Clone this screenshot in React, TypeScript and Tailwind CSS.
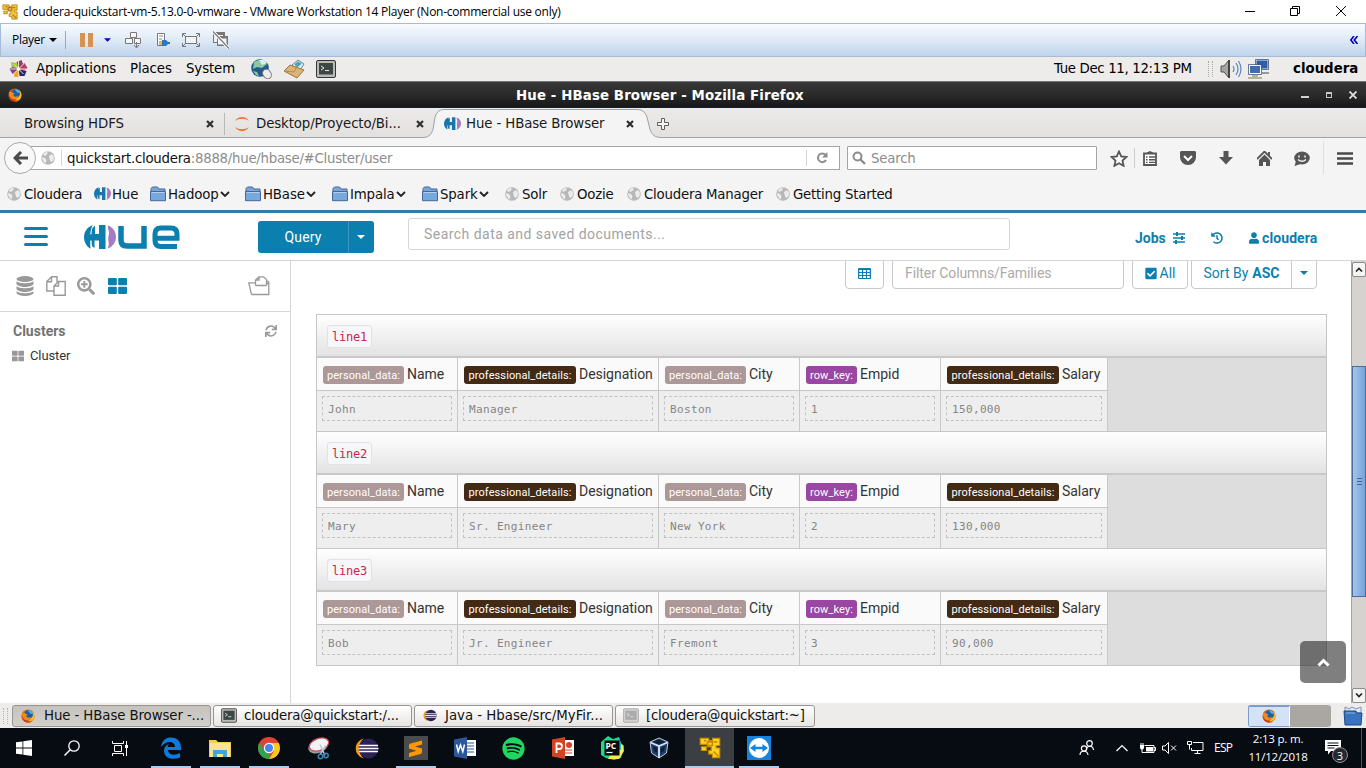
import React from "react";
import type { ReactNode } from "react";
import { FaSearchPlus, FaThLarge, FaSync, FaHistory, FaCheckSquare, FaSpotify, FaUser } from "react-icons/fa";

const dejavu = "font-['DejaVu_Sans',sans-serif]";

function Cell({ className, children }: { className: string; children?: ReactNode }) {
  return <div className={"flex shrink-0 items-center whitespace-nowrap " + className}>{children}</div>;
}

function VmwareIcon({ className, bright }: { className: string; bright?: boolean }) {
  const a = bright ? "#ffd21c" : "#f4c542";
  const b = bright ? "#c98c00" : "#b27a12";
  return (
    <svg viewBox="0 0 18 18" className={className}>
      <path d="M1 1h7v2h3V1h6v6h-3v2h3v8h-6v-3H8v-3h2V8H7V6H1z" fill={a} stroke={b} strokeWidth=".9" />
      <path d="M7 4h4v3H7zM12 12l4 4M4 3h2M12 4h3" fill="none" stroke={b} strokeWidth="1.3" />
      <path d="M2 8h4v3H2z" fill={a} stroke={b} strokeWidth=".9" />
    </svg>
  );
}

function FirefoxIcon({ className }: { className: string }) {
  return (
    <svg viewBox="0 0 16 16" className={className}>
      <circle cx="8" cy="8" r="7.5" fill="#e4600f" />
      <path d="M8 15.5A7.5 7.5 0 0 0 14.5 4.5L12 2l1 6-4 5z" fill="#ffb520" />
      <circle cx="8.6" cy="6.3" r="5" fill="#1c5fa8" />
      <path d="M8 2c2-1.500 5 .5 5.500 4l-3-1z" fill="#4db3e8" />
      <path d="M.8 5C2 4 4 4 5.500 5.500L7.500 6 6 8c1 2 3 2.500 5.500 1-1 4-6 5-9 2z" fill="#f08a1c" />
      <path d="M.6 8c.5 4 3.500 7.500 8 7.500 2 0 3-.5 4-1.300-6 .8-9.500-1.500-12-6.200z" fill="#c9301a" />
    </svg>
  );
}

function GlobeIcon({ className }: { className: string }) {
  return (
    <svg viewBox="0 0 14 14" className={className}>
      <circle cx="7" cy="7" r="6.800" fill="#b8b8b8" />
      <path d="M2 3l3-2 2 .6L5.500 4 3 5zM1 6l3 1 1.500 2-1 3.500C2.500 11 1 9 1 6zM8 5l3-2 2 2.500-.5 4L10 11 8.500 8z" fill="#ececec" />
    </svg>
  );
}

function HueMark({ blue }: { blue: string }) {
  return (
    <g>
      <path d="M9 0C3 2 0 7 0 12s2.500 9.500 6.500 11.700C6 20 6.500 17 7 15.500h8V24h6.500V0H15v9H7.500C7.500 5.500 8 3 9 0z" fill={blue} />
      <path d="M7.500 9.500V4L11 .5V9.500zM7.500 15v6l3 2V15z" fill={blue} />
      <path d="M24 .5c5.500 2 8 6.500 8 11.500s-3 9.500-8.500 11.800c2.500-5 .5-7 .8-10.800 0-3 1-3 .7-6-.3-2-1.500-3-1-6.500z" fill="#a77bc0" />
    </g>
  );
}

function HueIcon({ className }: { className: string }) {
  return (
    <svg viewBox="0 0 32 24" className={className}>
      <HueMark blue="#1a77ae" />
    </svg>
  );
}

function FolderIcon() {
  return (
    <svg viewBox="0 0 17 16" className="h-4 w-[17px]">
      <path d="M1 14V2.500L2.500 1h5L9 3h6v2" fill="#7da4d3" stroke="#41699f" />
      <path d="M.5 5.500h15v9.200H.5z" fill="#78a8dc" stroke="#41699f" />
      <path d="M1.500 6.500h13" stroke="#b4d0ee" />
    </svg>
  );
}

function TerminalIcon({ className, faded }: { className: string; faded?: boolean }) {
  return (
    <svg viewBox="0 0 20 18" className={className}>
      <rect x=".5" y=".5" width="19" height="17" rx="1.500" fill={faded ? "#d0d0d0" : "#b9bbb6"} stroke={faded ? "#a5a5a5" : "#33373a"} />
      <rect x="3" y="3" width="14" height="11.500" fill={faded ? "#ababab" : "#3e4746"} />
      <path d="M5 6l3 2-3 2M9 10.500h4" stroke={faded ? "#e8e8e8" : "#e6eae4"} fill="none" />
    </svg>
  );
}

function EclipseIcon({ className }: { className: string }) {
  return (
    <svg viewBox="0 0 24 22" className={className}>
      <path d="M9 1C-2 4-2 18 9 21 3 17 3 5 9 1z" fill="#f59a22" />
      <circle cx="13.500" cy="11" r="10" fill="#2c2255" />
      <path d="M4 8h19M3.500 11h20M4 14h19" stroke="#fff" strokeWidth="1.500" />
    </svg>
  );
}

function CloseX() {
  return (
    <svg viewBox="0 0 8 8" className="h-2 w-2">
      <path d="M1 1l6 6M7 1L1 7" stroke="#2f2f2f" strokeWidth="2.200" />
    </svg>
  );
}

function CaretDown({ className }: { className: string }) {
  return (
    <svg viewBox="0 0 8 4" className={className}>
      <path d="M0 0h8L4 4z" fill="currentColor" />
    </svg>
  );
}

function VmTitleBar() {
  return (
    <div className="flex h-[23px] shrink-0 items-center bg-white font-['Open_Sans',sans-serif] text-[12px] text-black">
      <Cell className="w-[23px] pl-[2px]"><VmwareIcon className="h-4 w-4" /></Cell>
      <Cell className="w-[1222px] tracking-[-0.24px]">cloudera-quickstart-vm-5.13.0-0-vmware - VMware Workstation 14 Player (Non-commercial use only)</Cell>
      <Cell className="w-[45px]"><svg viewBox="0 0 10 10" className="h-[10px] w-[10px]"><path d="M0 4.500h10" stroke="#000" /></svg></Cell>
      <Cell className="w-[46px] pb-[2px]">
        <svg viewBox="0 0 10 10" className="h-[10px] w-[10px]"><path d="M.5 2.500h7v7h-7zM2.500 2.500v-2h7v7h-2" fill="none" stroke="#000" /></svg>
      </Cell>
      <Cell className="pb-[2px]"><svg viewBox="0 0 10 10" className="h-[10px] w-[10px]"><path d="M0 0l10 10M10 0L0 10" stroke="#000" /></svg></Cell>
    </div>
  );
}

function PlayerToolbar() {
  return (
    <div className="flex h-[34px] shrink-0 items-center border border-[#a5bcd8] bg-linear-to-b from-[#f8fcff] via-[#dfeaf6] to-[#bed3ec] font-['Open_Sans',sans-serif] text-[12px] text-black">
      <Cell className="w-[39px] pl-[11px] tracking-[-0.3px]">Player</Cell>
      <Cell className="w-[25px] justify-end pr-[8px]"><CaretDown className="h-[4px] w-[8px]" /></Cell>
      <Cell className="h-[18px] w-[15px] border-l border-[#8fa9cb]" />
      <Cell className="w-[24px]">
        <svg viewBox="0 0 13 14" className="h-[14px] w-[13px]"><path d="M0 0h5v14H0zM8 0h5v14H8z" fill="#d6924e" /></svg>
      </Cell>
      <Cell className="w-[21px] text-[#0000c8]"><CaretDown className="h-[4px] w-[7px]" /></Cell>
      <Cell className="w-[31px]">
        <svg viewBox="0 0 17 18" className="h-[18px] w-[17px]" fill="#f5f7fa" stroke="#777" strokeWidth="1">
          <path d="M5.500 1.500h6v5h-6zM.5 7.500h7v5h-7zM9.500 7.500h6v5h-6z" /><path d="M11.500 11v5M9 14l2.500 3 2.500-3" fill="none" />
        </svg>
      </Cell>
      <Cell className="w-[26px]">
        <svg viewBox="0 0 14 16" className="h-[16px] w-[14px]">
          <path d="M1.500 1.500h7v12h-7z" fill="#fff" stroke="#777" /><path d="M3 4h4M3 7h3" stroke="#888" /><path d="M3 9h3v4H3z" fill="#e9b83a" /><path d="M6 8h4l2 2h2v2h-2l-2 2H6z" fill="#2a78c4" />
        </svg>
      </Cell>
      <Cell className="w-[30px]">
        <svg viewBox="0 0 18 14" className="h-[14px] w-[18px]" fill="none" stroke="#777">
          <path d="M3.500 3.500h11v7h-11z" fill="#f1f5fa" /><path d="M.5 4V.5H4M14 .5h3.500V4M17.500 10v3.500H14M4 13.500H.5V10M1 1l3 3M17 1l-3 3M17 13l-3-3M1 13l3-3" />
        </svg>
      </Cell>
      <Cell className="w-[24px]">
        <svg viewBox="0 0 18 18" className="h-[18px] w-[18px]">
          <path d="M1 1h12v11H1z" fill="#777" /><path d="M2 4h9v7H2z" fill="#eef3f9" /><path d="M5 5h11v10H5z" fill="#777" /><path d="M6 7.500h8.500v6H6z" fill="#eef3f9" /><path d="M1 .5l16 17" stroke="#fff" strokeWidth="3" /><path d="M1 .5l16 17" stroke="#777" strokeWidth="1.200" />
        </svg>
      </Cell>
      <div className="flex-1" />
      <Cell className="w-[15px]">
        <svg viewBox="0 0 8 8" className="h-2 w-2"><path d="M4 0L.8 4 4 8M7.500 0l-3.200 4 3.200 4" fill="none" stroke="#0000b8" strokeWidth="1.600" /></svg>
      </Cell>
    </div>
  );
}

function GnomeTopPanel() {
  return (
    <div className={"flex h-[24px] shrink-0 items-center bg-[#edeceb] pb-[1px] text-[13.33px] text-black " + dejavu}>
      <Cell className="w-[36px] pl-2">
        <svg viewBox="0 0 20 20" className="h-[20px] w-[21px]">
          <path d="M10 10L3 8l-.5-5L8 4z" fill="#9ccb3b" /><path d="M10 10L8 3l5-2 2 5z" fill="#8c3a8c" /><path d="M10 10l6-6 3 5-3 2z" fill="#c0356f" /><path d="M10 10l8 2-2 5-5 0z" fill="#262577" /><path d="M10 10l1 8-5 0-1-4z" fill="#efa724" /><path d="M10 10l-6 5-3-5 3-2z" fill="#7e3f98" />
          <path d="M10 2v16M2 10h16M5 5l10 10M15 5L5 15" stroke="#f6d9a0" strokeWidth="1" /><circle cx="10" cy="10" r="1.800" fill="#fff" />
        </svg>
      </Cell>
      <Cell className="w-[94px] tracking-[-0.1px]">Applications</Cell>
      <Cell className="w-[56px] tracking-[-0.1px]">Places</Cell>
      <Cell className="w-[64px] tracking-[-0.1px]">System</Cell>
      <Cell className="w-[33px]">
        <svg viewBox="0 0 22 20" className="h-[20px] w-[22px]">
          <circle cx="10" cy="9" r="8.800" fill="#245a8c" /><path d="M4 3l4-2 6 1 3 3-5 4-5-1-4 2zM3 12l4 1 2 4-3-1z" fill="#8cc7a0" /><path d="M9 1h6l2 3-5 2z" fill="#d5eef6" /><ellipse cx="17" cy="15" rx="4" ry="5" transform="rotate(-35 17 15)" fill="#ededed" stroke="#777" />
        </svg>
      </Cell>
      <Cell className="w-[33px]">
        <svg viewBox="0 0 22 20" className="h-[20px] w-[22px]">
          <path d="M9 6l6-5 6 4-5 8z" fill="#d8eaf2" stroke="#698f9c" /><path d="M12 6l4-3M13 8l5-4" stroke="#4a9cb4" strokeWidth="2" /><path d="M1 12l6-6 14 5-7 8z" fill="#dcb377" stroke="#9c743a" /><path d="M1 12l10 1 3-6" fill="none" stroke="#b58a4b" />
        </svg>
      </Cell>
      <Cell className="w-[28px]"><TerminalIcon className="h-[18px] w-[20px]" /></Cell>
      <div className="flex-1" />
      <Cell className="w-[154px] tracking-[-0.35px]">Tue Dec 11, 12:13 PM</Cell>
      <Cell className="h-4 w-[12px]"><div className="h-4 w-[5px] border-x border-dotted border-[#aaa]" /></Cell>
      <Cell className="w-[28px]">
        <svg viewBox="0 0 22 20" className="h-[20px] w-[22px]">
          <path d="M1 7h3l5-6v18l-5-6H1z" fill="#a4a4a2" stroke="#555" /><path d="M9 1v18" stroke="#444" strokeWidth="2" /><path d="M13 7q2 3 0 6M16 4q4 6 0 12M18.500 2q5 8 0 16" fill="none" stroke="#5a86bf" strokeWidth="1.200" />
        </svg>
      </Cell>
      <Cell className="w-[45px]">
        <svg viewBox="0 0 22 20" className="h-[20px] w-[22px]">
          <path d="M8 1h12v9H8z" fill="#2e5ea3" stroke="#dfe5ed" /><path d="M7.500.5h13v10h-13z" fill="none" stroke="#465b7c" strokeWidth=".8" /><path d="M14 14h7" stroke="#999" strokeWidth="2" /><path d="M1.500 6.500h11v8h-11z" fill="#3d6db3" stroke="#fff" /><path d="M.5 5.500h13v10H.5z" fill="none" stroke="#465b7c" strokeWidth=".8" /><path d="M4 17h6M0 19h14" stroke="#a0a094" strokeWidth="1.500" />
        </svg>
      </Cell>
      <Cell className="w-[73px] font-bold">cloudera</Cell>
    </div>
  );
}

function FirefoxTitle() {
  return (
    <div className={"flex h-[27px] shrink-0 items-center border-y border-t-[#777] border-b-[#14212c] bg-linear-to-b from-[#383838] via-[#2b2b2b] to-[#171717] text-[13.33px] font-bold text-white " + dejavu}>
      <Cell className="w-[516px] pl-2"><FirefoxIcon className="h-[14px] w-[14px]" /></Cell>
      <Cell className="w-[785px] pt-[2px] tracking-[0.12px]">Hue - HBase Browser - Mozilla Firefox</Cell>
      <Cell className="w-[25px] pt-[5px]"><div className="h-[2px] w-[8px] bg-[#d0d0d0]" /></Cell>
      <Cell className="w-[23px]"><div className="h-[6px] w-[6px] border border-t-2 border-[#c8c8c8]" /></Cell>
      <Cell className=""><svg viewBox="0 0 8 8" className="h-2 w-2"><path d="M.5.5l7 7M7.500.5l-7 7" stroke="#ddd" strokeWidth="1.800" /></svg></Cell>
    </div>
  );
}

function TabStrip() {
  return (
    <div className={"relative flex h-[30px] shrink-0 items-center border-b border-[#a5a5a3] bg-linear-to-b from-[#ecebea] to-[#e2e1df] pt-[2px] text-[13.33px] text-[#1a1a1a] " + dejavu}>
      <svg viewBox="0 0 240 30" className="absolute top-0 left-[422px] h-[30px] w-[240px]">
        <path d="M0 30v-.5c6 0 9-2 11-8L13 9c2-6 5-7.500 10-7.500h191c6 0 9 2 11 7.500l3 12.500c2 5 4 8 12 8v.5z" fill="#f4f4f4" />
        <path d="M0 29.500c6 0 9-2 11-8L13 9c2-6 5-7.500 10-7.500h191c6 0 9 2 11 7.500l3 12.500c2 5 4 8 12 8" fill="none" stroke="#a0a09e" />
      </svg>
      <Cell className="w-[206px] pl-6 tracking-[-0.12px]">Browsing HDFS</Cell>
      <Cell className="w-[18px]"><CloseX /></Cell>
      <Cell className="h-[22px] w-[10px] border-l border-[#b8b8b6]" />
      <Cell className="w-[22px]">
        <svg viewBox="0 0 16 16" className="h-4 w-4"><path d="M1 5C4-.5 12-.5 15 5 11 2 5 2 1 5zM1 11c3 5.500 11 5.500 14 0-4 3-10 3-14 0z" fill="#ee7330" /></svg>
      </Cell>
      <Cell className="w-[160px] tracking-[-0.12px]">Desktop/Proyecto/Bi...</Cell>
      <Cell className="w-[28px]"><CloseX /></Cell>
      <Cell className="relative w-[22px]"><HueIcon className="h-[13px] w-[17px]" /></Cell>
      <Cell className="relative w-[160px] tracking-[-0.12px]">Hue - HBase Browser</Cell>
      <Cell className="relative w-[31px]"><CloseX /></Cell>
      <Cell className="">
        <svg viewBox="0 0 12 12" className="h-3 w-3"><path d="M4.500.5h3v4h4v3h-4v4h-3v-4h-4v-3h4z" fill="#f5f5f5" stroke="#5d5d5d" /></svg>
      </Cell>
    </div>
  );
}

function NavBar() {
  return (
    <div className={"flex h-[40px] shrink-0 items-center bg-[#f4f4f4] text-[13.33px] " + dejavu}>
      <div className="relative z-10 ml-1 flex h-8 w-8 shrink-0 items-center justify-center rounded-full border border-[#a9a9a9] bg-[#f8f8f8]">
        <svg viewBox="0 0 15 14" className="h-[14px] w-[15px]"><path d="M8 1L2 7l6 6M2 7h13" fill="none" stroke="#4a4a4a" strokeWidth="3" /></svg>
      </div>
      <div className="-ml-3 flex h-6 w-[816px] shrink-0 items-center border border-[#a5a5a5] bg-white">
        <Cell className="w-[36px] pl-4"><GlobeIcon className="h-[14px] w-[14px]" /></Cell>
        <Cell className="h-4 w-[6px] border-l border-[#d5d5d5]" />
        <Cell className="w-[739px] pt-[2px] tracking-[-0.27px] text-[#8c8c8c]"><span className="text-[#111]">quickstart.cloudera</span>:8888/hue/hbase/#Cluster/user</Cell>
        <Cell className="h-4 w-[10px] border-l border-[#d5d5d5]" />
        <Cell className="">
          <svg viewBox="0 0 12 12" className="h-3 w-3"><path d="M9.500 3A4.300 4.300 0 1 0 10 8" fill="none" stroke="#8e8e8e" strokeWidth="2" /><path d="M11.500 0v5.500H6z" fill="#8e8e8e" /></svg>
        </Cell>
      </div>
      <div className="ml-[7px] flex h-6 w-[250px] shrink-0 items-center rounded-[1px] border border-[#a5a5a5] bg-white">
        <Cell className="w-[23px] pl-1">
          <svg viewBox="0 0 14 14" className="h-[14px] w-[14px]"><circle cx="5.500" cy="5.500" r="4" fill="none" stroke="#8c8c8c" strokeWidth="2" /><path d="M8.500 8.500l4.500 4.500" stroke="#8c8c8c" strokeWidth="2.400" /></svg>
        </Cell>
        <span className="pt-[2px] tracking-[-0.2px] text-[#8c8c8c]">Search</span>
      </div>
      <Cell className="w-[37px] justify-end">
        <svg viewBox="0 0 18 17" className="mr-[6px] h-[17px] w-[18px]"><path d="M9 1.500l2.200 4.900 5.300.6-4 3.600 1.100 5.200L9 13.200l-4.600 2.600 1.100-5.200-4-3.600 5.300-.6z" fill="#fafafa" stroke="#555" strokeWidth="1.800" /></svg>
      </Cell>
      <Cell className="h-5 w-[9px] border-l border-[#ccc]" />
      <Cell className="w-[37px]">
        <svg viewBox="0 0 14 15" className="h-[15px] w-[14px]"><path d="M1 2.500h12v11.500H1z" fill="#fff" stroke="#555" strokeWidth="1.800" /><path d="M4 3V1.500L7 0l3 1.500V3z" fill="#555" /><path d="M3 6h1.500M6 6h6M3 8.700h1.500M6 8.700h6M3 11.400h1.500M6 11.400h6" stroke="#555" strokeWidth="1.400" /></svg>
      </Cell>
      <Cell className="w-[39px]">
        <svg viewBox="0 0 16 14" className="h-[14px] w-[16px]"><path d="M1 0h14l1 1v5a8 8 0 0 1-16 0V1z" fill="#555" /><path d="M4 5l4 4 4-4" fill="none" stroke="#fff" strokeWidth="2" /></svg>
      </Cell>
      <Cell className="w-[38px]"><svg viewBox="0 0 14 14" className="h-[14px] w-[14px]"><path d="M4.500 0h5v6H14l-7 7.500L0 6h4.500z" fill="#555" /></svg></Cell>
      <Cell className="w-[37px]">
        <svg viewBox="0 0 15 15" className="h-[15px] w-[15px]"><path d="M0 8l7.500-7.500L15 8" fill="none" stroke="#555" strokeWidth="1.800" /><path d="M2 9l5.500-5.500L13 9v6H9v-4H6v4H2z" fill="#555" /><path d="M11 1h2v4l-2-2z" fill="#555" /></svg>
      </Cell>
      <Cell className="w-[29px]">
        <svg viewBox="0 0 16 15" className="h-[15px] w-[16px]"><ellipse cx="8" cy="7" rx="7.800" ry="6.500" fill="#555" /><path d="M2 10L.5 15l6-2z" fill="#555" /><path d="M5 4.500v2M11 4.500v2M4 8.500q4 3.500 8 0" fill="none" stroke="#f4f4f4" strokeWidth="1.500" /></svg>
      </Cell>
      <Cell className="h-8 w-[14px] border-l border-[#ddd]" />
      <Cell className=""><svg viewBox="0 0 16 13" className="h-[13px] w-4"><path d="M0 1.500h16M0 6.500h16M0 11.500h16" stroke="#4a4a4a" strokeWidth="2.400" /></svg></Cell>
    </div>
  );
}

function Chevron() {
  return <svg viewBox="0 0 10 6" className="ml-[1px] h-[6px] w-[10px]"><path d="M1 1l4 4 4-4" fill="none" stroke="#222" strokeWidth="1.800" /></svg>;
}

const bookmarks = [
  { label: "Cloudera", kind: "globe", width: "w-[87px]" },
  { label: "Hue", kind: "hue", width: "w-[56px]" },
  { label: "Hadoop", kind: "folder", width: "w-[95px]" },
  { label: "HBase", kind: "folder", width: "w-[87px]" },
  { label: "Impala", kind: "folder", width: "w-[90px]" },
  { label: "Spark", kind: "folder", width: "w-[83px]" },
  { label: "Solr", kind: "globe", width: "w-[55px]" },
  { label: "Oozie", kind: "globe", width: "w-[67px]" },
  { label: "Cloudera Manager", kind: "globe", width: "w-[149px]" },
  { label: "Getting Started", kind: "globe", width: "w-[130px]" },
];

function BookmarksBar() {
  return (
    <div className={"flex h-[35px] shrink-0 items-center border-b-3 border-[#2f7fa3] bg-[#f4f4f4] pl-[7px] text-[13.33px] text-[#111] " + dejavu}>
      {bookmarks.map((b) => (
        <Cell key={b.label} className={b.width}>
          <div className="flex w-[17px] shrink-0">
            {b.kind === "globe" && <GlobeIcon className="h-[14px] w-[14px]" />}
            {b.kind === "hue" && <HueIcon className="h-[13px] w-[17px]" />}
            {b.kind === "folder" && <FolderIcon />}
          </div>
          <span className={"pt-[2px] " + (b.kind === "globe" ? "tracking-[-0.23px]" : "ml-[1px] tracking-[-0.15px]")}>{b.label}</span>
          {b.kind === "folder" && <Chevron />}
        </Cell>
      ))}
    </div>
  );
}

function HueHeader() {
  return (
    <div className="flex h-[48px] shrink-0 items-center border-b border-[#d6d6d6] bg-white text-[14px] text-[#0b7fad]">
      <Cell className="w-[84px] pl-6"><svg viewBox="0 0 24 19" className="h-[19px] w-6"><path d="M1.500 1.500h21M1.500 9.500h21M1.500 17.500h21" stroke="#0b7fad" strokeWidth="3" strokeLinecap="round" /></svg></Cell>
      <Cell className="w-[174px]">
        <svg viewBox="0 0 96 24" className="h-6 w-24">
          <HueMark blue="#0b7fad" />
          <path d="M9.500 0C7.500 3 7 6 6.800 9.500M6.800 15.500c0 3 .5 6 2 8.500" stroke="#fff" strokeWidth="1" fill="none" />
          <path d="M37 1v14q0 6 6 6h17V1" fill="none" stroke="#0b7fad" strokeWidth="5.500" />
          <path d="M93 21.500H77q-6 0-6-6V9q0-6 6-6h10q6 0 6 6v4.200H71" fill="none" stroke="#0b7fad" strokeWidth="5" />
        </svg>
      </Cell>
      <div className="flex h-8 w-[116px] shrink-0 rounded-[3px] bg-[#0b7fad] text-white">
        <div className="flex w-[91px] items-center justify-center border-r border-[#3d97bd] pt-[1px] tracking-[0.1px]">Query</div>
        <div className="flex flex-1 items-center justify-center"><CaretDown className="mr-[1px] h-[4px] w-[8px]" /></div>
      </div>
      <div className="mb-[6px] ml-[34px] flex h-8 w-[602px] shrink-0 items-center rounded-[3px] border border-[#d5d5d5] pt-[1px] pl-[15px] tracking-[0.46px] text-[#a3a3a3]">Search data and saved documents...</div>
      <Cell className="ml-[125px] w-[38px] pt-[3px] font-bold">Jobs</Cell>
      <Cell className="w-[38px] pt-[3px]">
        <svg viewBox="0 0 12 12" className="h-3 w-3" stroke="#0b7fad"><path d="M0 2h12M0 6h12M0 10h12" strokeWidth="1.300" /><path d="M4 0v4M9 4v4M3 8v4" strokeWidth="2" /></svg>
      </Cell>
      <Cell className="w-[38px] pt-[3px]"><FaHistory className="h-3 w-3" /></Cell>
      <Cell className="w-[13px] pt-[2px]"><FaUser className="h-[12px] w-[10px]" /></Cell>
      <Cell className="pt-[3px] font-bold tracking-[0.1px]">cloudera</Cell>
    </div>
  );
}

function Sidebar() {
  return (
    <div className="flex w-[291px] shrink-0 flex-col border-r border-[#d6d6d6] bg-white">
      <div className="flex h-[51px] items-center border-b border-[#d6d6d6] text-[#9b9b9b]">
        <Cell className="w-[46px] pl-4">
          <svg viewBox="0 0 18 20" className="h-5 w-[18px]" fill="#999"><ellipse cx="9" cy="3" rx="8.500" ry="3" /><path d="M.5 5c2 3 15 3 17 0v3c-2 4-15 4-17 0zM.5 10c2 3 15 3 17 0v3c-2 4-15 4-17 0zM.5 15c2 3 15 3 17 0v2c-2 4-15 4-17 0z" /></svg>
        </Cell>
        <Cell className="w-[31px]">
          <svg viewBox="0 0 20 20" className="h-5 w-5" fill="#fff" stroke="#999" strokeWidth="1.400"><path d="M5.500.8H11v5.500M8 15H.8V5.500L5.500.8v5H.8" /><path d="M12.500 5.500h6.700v13.700H8V10zM12.500 5.500V10H8" /></svg>
        </Cell>
        <Cell className="w-[31px]"><FaSearchPlus className="h-[18px] w-[18px]" /></Cell>
        <Cell className="w-[140px] text-[#0b7fad]">
          <svg viewBox="0 0 19 16" className="h-4 w-[19px]" fill="#0b7fad"><rect width="8.800" height="7.300" rx="1" /><rect x="10.200" width="8.800" height="7.300" rx="1" /><rect y="8.700" width="8.800" height="7.300" rx="1" /><rect x="10.200" y="8.700" width="8.800" height="7.300" rx="1" /></svg>
        </Cell>
        <Cell className="">
          <svg viewBox="0 0 22 20" className="h-5 w-[22px]" fill="none" stroke="#999" strokeWidth="1.300"><path d="M3.500 18.500L.8 6.800H7.500M3.500 18.500h17.300V6L18.500 4.500M.8 6.800h.5M18.500 9l2-3M3.500 18.500M7.500 9.500h11M7.500 9.500V4L11 .8h4.500l3 2.700v6M11 .8V4H7.500" /></svg>
        </Cell>
      </div>
      <div className="flex h-[38px] items-center justify-between pr-[13px] pl-[13px]">
        <span className="text-[14px] font-bold text-[#737373]">Clusters</span>
        <FaSync className="h-[12px] w-[12px] text-[#999]" />
      </div>
      <div className="flex h-[11px] items-center pl-3 text-[13px] tracking-[-0.1px] text-[#333]">
        <FaThLarge className="mr-[6px] h-3 w-3 text-[#999]" />Cluster
      </div>
    </div>
  );
}

function FilterRow() {
  const box = "flex h-8 shrink-0 items-center justify-center rounded-[4px] border border-[#c9c9c9] ";
  return (
    <div className="-mt-[4px] ml-[554px] flex h-8 shrink-0 text-[14px] text-[#0b7fad]">
      <div className={box + "w-[39px]"}>
        <svg viewBox="0 0 13 11" className="h-[11px] w-[13px]"><rect width="13" height="11" rx="1" fill="#0b7fad" /><path d="M1.300 2h2.700v2H1.300zM5.200 2h2.700v2H5.200zM9 2h2.700v2H9zM1.300 5h2.700v2H1.300zM5.200 5h2.700v2H5.200zM9 5h2.700v2H9zM1.300 8h2.700v2H1.300zM5.200 8h2.700v2H5.200zM9 8h2.700v2H9z" fill="#fff" /></svg>
      </div>
      <div className={box + "ml-2 w-[232px] justify-start pl-3 tracking-[-0.08px] text-[#aaa]"}>Filter Columns/Families</div>
      <div className={box + "ml-2 w-[56px] gap-[3px]"}><FaCheckSquare className="h-[13px] w-[12px]" />All</div>
      <div className={box + "ml-[3px] w-[126px]"}>
        <div className="flex h-full w-[100px] items-center justify-center gap-1 border-r border-[#c9c9c9]">Sort By <b>ASC</b></div>
        <div className="flex flex-1 justify-center"><CaretDown className="h-[4px] w-[8px]" /></div>
      </div>
    </div>
  );
}

const columns = [
  { family: "personal_data:", name: "Name", width: "w-[141px]", tag: "w-[81px] bg-[#ac9799]" },
  { family: "professional_details:", name: "Designation", width: "w-[201px]", tag: "w-[112px] bg-[#432a15]" },
  { family: "personal_data:", name: "City", width: "w-[141px]", tag: "w-[81px] bg-[#ac9799]" },
  { family: "row_key:", name: "Empid", width: "w-[141px]", tag: "w-[51px] bg-[#9a47a3]" },
  { family: "professional_details:", name: "Salary", width: "w-[167px]", tag: "w-[112px] bg-[#432a15]" },
];

const rows = [
  { key: "line1", values: ["John", "Manager", "Boston", "1", "150,000"] },
  { key: "line2", values: ["Mary", "Sr. Engineer", "New York", "2", "130,000"] },
  { key: "line3", values: ["Bob", "Jr. Engineer", "Fremont", "3", "90,000"] },
];

function DataTable() {
  return (
    <div className="mt-[25px] ml-[25px] w-[1011px] border border-t-0 border-[#c6c6c6]">
      {rows.map((r) => (
        <div key={r.key} className="border-t border-[#c6c6c6]">
          <div className="flex h-[43px] items-center border-b-2 border-[#c8c8c8] bg-linear-to-b from-white to-[#e3e3e3] pl-[10px]">
            <span className="mt-[2px] flex h-[23px] w-[45px] items-center justify-center rounded-[3px] border border-[#e1e1e8] bg-[#f7f7f9] font-['DejaVu_Sans_Mono',monospace] text-[12px] tracking-[-0.2px] text-[#c7254e]">{r.key}</span>
          </div>
          <div className="flex h-[73px] bg-[#ddd]">
            {columns.map((c, i) => (
              <div key={i} className={"shrink-0 border-r border-[#c8c8c8] bg-[#eee] " + c.width}>
                <div className="flex h-[33px] items-center border-b border-[#c8c8c8] bg-[#fafafa] pl-[6px] text-[14px] tracking-[-0.03px] whitespace-nowrap text-[#333]">
                  <span className={"mt-[2px] mr-[3px] flex h-[18px] shrink-0 items-center justify-center rounded-[3px] pt-[2px] text-[11px] tracking-[0.1px] text-white " + c.tag}>{c.family}</span>
                  {c.name}
                </div>
                <div className="mx-[5px] mt-[5px] flex h-[25px] items-center border border-dashed border-[#c2c2c2] pt-[3px] pl-[5px] font-['DejaVu_Sans_Mono',monospace] text-[11px] tracking-[0.35px] text-[#858585]">{r.values[i]}</div>
              </div>
            ))}
          </div>
        </div>
      ))}
    </div>
  );
}

function ScrollBar() {
  const btn = "flex h-[15px] shrink-0 items-center justify-center rounded-[2px] border border-[#8c8c8a] bg-[#f5f5f4]";
  return (
    <div className="flex w-[15px] shrink-0 flex-col border-l border-[#a8a5a0] bg-[#d5d2cf] pt-[1px]">
      <div className={btn}><svg viewBox="0 0 8 5" className="h-[5px] w-2"><path d="M1 4.500l3-3 3 3" fill="none" stroke="#222" strokeWidth="1.600" /></svg></div>
      <div className="mt-[89px] flex h-[231px] shrink-0 items-center justify-center border border-[#4a6c9c] bg-linear-to-r from-[#a3c4eb] to-[#76a3da]">
        <div className="h-[7px] w-[5px] border-y border-[#44648f]"><div className="mt-[2px] h-px bg-[#44648f]" /></div>
      </div>
      <div className="flex-1" />
      <div className={btn}><svg viewBox="0 0 8 5" className="h-[5px] w-2"><path d="M1 .5l3 3 3-3" fill="none" stroke="#222" strokeWidth="1.600" /></svg></div>
    </div>
  );
}

function GnomeBottomPanel() {
  const btn = "mr-[2px] flex h-[22px] shrink-0 items-center rounded-[3px] border border-[#989692] pl-2 whitespace-nowrap ";
  const light = "bg-linear-to-b from-white to-[#e6e5e3] ";
  return (
    <div className={"flex h-[25px] shrink-0 items-center bg-[#edeceb] text-[13.33px] text-[#111] " + dejavu}>
      <div className="mr-1 ml-[3px] h-4 w-[5px] border-x border-dotted border-[#b5b5b3]" />
      <div className={btn + "w-[199px] bg-linear-to-b from-[#c6c3be] to-[#d3d0cb]"}><FirefoxIcon className="mr-[9px] h-[14px] w-[14px]" /><span className="pt-[1px] tracking-[-0.1px]">Hue - HBase Browser -...</span></div>
      <div className={btn + light + "w-[199px]"}><TerminalIcon className="mr-[7px] -ml-[1px] h-[15px] w-4" /><span className="tracking-[-0.2px]">cloudera@quickstart:/...</span></div>
      <div className={btn + light + "w-[199px]"}><EclipseIcon className="mr-[8px] h-[13px] w-[14px]" /><span className="tracking-[-0.02px]">Java - Hbase/src/MyFir...</span></div>
      <div className={btn + light + "w-[200px]"}><TerminalIcon faded className="mr-[7px] -ml-[1px] h-[15px] w-4" /><span className="tracking-[-0.23px]">[cloudera@quickstart:~]</span></div>
      <div className="flex-1" />
      <div className="mr-3 flex h-[22px] w-[83px] shrink-0 overflow-hidden rounded-[3px] bg-[#aaa7a3]">
        <div className="flex w-[42px] items-center justify-center border border-t-2 border-[#7d9cc6] border-r-white bg-[#d3e2f6]"><FirefoxIcon className="h-[14px] w-[14px]" /></div>
      </div>
      <Cell className="w-[23px]">
        <svg viewBox="0 0 20 20" className="h-[20px] w-[20px]"><path d="M2 1l4 2 3-2 4 2 5-2v6H2z" fill="#e3ebf5" stroke="#7a92b4" /><path d="M1 5h12l1 2h5l-1 12H2z" fill="#3b72bd" stroke="#1f4784" /><path d="M3 7h9" stroke="#8ab3e8" /></svg>
      </Cell>
    </div>
  );
}

function TaskCell({ children, underline, active }: { children: ReactNode; underline?: boolean; active?: boolean }) {
  return (
    <div className={"relative flex h-10 w-[49px] shrink-0 items-center justify-center " + (active ? "bg-[#3b3e42]" : "")}>
      {children}
      {underline && <div className={"absolute bottom-0 h-[2px] bg-[#a9cdf0] " + (active ? "w-[49px]" : "w-10")} />}
    </div>
  );
}

function WindowsTaskbar() {
  const ic = "h-[23px] w-[24px]";
  return (
    <div className="flex h-10 shrink-0 items-center bg-[#070b12] font-['Open_Sans',sans-serif] text-white">
      <Cell className="w-12 justify-center"><svg viewBox="0 0 16 16" className="h-4 w-4"><path d="M0 2.300l6.500-.9v6.200H0zM7.300 1.300L16 0v7.600H7.300zM0 8.400h6.500v6.200L0 13.700zM7.300 8.400H16V16l-8.700-1.300z" fill="#fff" /></svg></Cell>
      <Cell className="w-12 justify-center"><svg viewBox="0 0 16 16" className="h-4 w-4"><circle cx="10" cy="6" r="5.200" fill="none" stroke="#fff" strokeWidth="1.300" /><path d="M6.200 9.800L.5 15.500" stroke="#fff" strokeWidth="1.500" /></svg></Cell>
      <Cell className="w-[50px] pl-[16px]"><svg viewBox="0 0 16 15" className="h-[15px] w-4"><path d="M2.500 4.500h7v6h-7zM.5 0v2.500h11V0M.5 15v-2.500h11V15M14.500 0v15" fill="none" stroke="#fff" /><path d="M13 4h3v3h-3z" fill="#fff" /></svg></Cell>
      <TaskCell underline>
        <svg viewBox="0 0 22 22" className="h-[22px] w-[22px]"><path d="M1 10C2 3 6 .5 11 .5c6 0 10 4 10 10V13H8c0 5 7 6 12 3v4.500c-8 3-16 1-16-7 0-3 2-5.500 5-6.500-1 1-1.300 2-1.300 3H15c0-6-9-7-14 0z" fill="#0c7bdc" /></svg>
      </TaskCell>
      <TaskCell underline>
        <svg viewBox="0 0 22 19" className="h-[19px] w-[22px]"><path d="M0 1h7l2 2h13v15H0z" fill="#f3cc5c" /><path d="M1 4h20v14H1z" fill="#fbe394" /><path d="M4 18v-7h14v7h-4v-3H8v3z" fill="#3fa6dd" /></svg>
      </TaskCell>
      <TaskCell underline>
        <svg viewBox="0 0 22 22" className="h-[22px] w-[22px]"><circle cx="11" cy="11" r="11" fill="#e34133" /><path d="M11 22A11 11 0 0 1 1.500 5.500L6.500 14l5 2z" fill="#30a350" /><path d="M11 22a11 11 0 0 0 9.700-16H11l5 8z" fill="#fbcb1c" /><circle cx="11" cy="11" r="5.200" fill="#fff" /><circle cx="11" cy="11" r="4" fill="#4386f0" /></svg>
      </TaskCell>
      <TaskCell>
        <svg viewBox="0 0 24 22" className={ic}><ellipse cx="12" cy="9" rx="10" ry="6.500" transform="rotate(-20 12 9)" fill="#9d9da4" /><ellipse cx="13" cy="7" rx="10" ry="6" transform="rotate(-20 13 7)" fill="#f6f3f4" stroke="#ce4856" strokeWidth="1.200" /><path d="M14 7l5 11M20 8l-6 9" stroke="#b9c9d6" strokeWidth="1.500" /><circle cx="20" cy="18" r="2.200" fill="none" stroke="#3a87b5" strokeWidth="1.500" /><circle cx="14.500" cy="19" r="2.200" fill="none" stroke="#3a87b5" strokeWidth="1.500" /></svg>
      </TaskCell>
      <TaskCell><EclipseIcon className={ic} /></TaskCell>
      <TaskCell underline>
        <svg viewBox="0 0 24 24" className="h-6 w-6"><path d="M0 0h24v24H0z" fill="#4b4b4b" /><path d="M18 4.500v4L11 10.500l7 2v3.500q0 1.500-1.500 2L5 21v-4l7.500-2.200L5 12.500V9q0-1 1.500-1.500z" fill="#ff9800" /></svg>
      </TaskCell>
      <TaskCell>
        <svg viewBox="0 0 22 22" className="h-[22px] w-[22px]"><path d="M12 3h10v16H12z" fill="#fff" /><path d="M13 6h7M13 9h7M13 12h7M13 15h7" stroke="#2b579a" strokeWidth="1.200" /><path d="M0 2.500L13 0v22L0 19.500z" fill="#2b579a" /><path d="M2.500 7.500l1.700 7L6.500 8l2.300 6.500 1.700-7" fill="none" stroke="#fff" strokeWidth="1.500" /></svg>
      </TaskCell>
      <TaskCell><FaSpotify className="h-[23px] w-[23px] text-[#1ed760]" /></TaskCell>
      <TaskCell>
        <svg viewBox="0 0 22 22" className="h-[22px] w-[22px]"><path d="M12 3h10v16H12z" fill="#fff" /><circle cx="17" cy="8" r="3" fill="#d24625" /><path d="M13 13h7M13 16h7" stroke="#d24625" strokeWidth="1.200" /><path d="M0 2.500L13 0v22L0 19.500z" fill="#d04423" /><path d="M4.500 16V6.500h2.700a2.500 2.500 0 0 1 0 5.500H4.500" fill="none" stroke="#fff" strokeWidth="1.800" /></svg>
      </TaskCell>
      <TaskCell>
        <svg viewBox="0 0 24 24" className="h-6 w-6"><path d="M1 6l7-6 5 3 6-2 2 6 3 3-3 12-7 2-8-2-5-3z" fill="#21d789" /><path d="M17 7l6 2 1 6-5 8H8z" fill="#f5ee48" /><path d="M18 1l3 6v7h-5z" fill="#29b7cf" /><path d="M4.500 4.500h15v15h-15z" fill="#0a0a0a" /><path d="M6.500 16.500h6" stroke="#fff" strokeWidth="1.200" /><text x="5.500" y="12.500" fontSize="8.500" fontWeight="700" fill="#fff" fontFamily="Open Sans, sans-serif">PC</text></svg>
      </TaskCell>
      <TaskCell>
        <svg viewBox="0 0 20 22" className="mr-1 h-[22px] w-5"><path d="M10 1l9 4-1.500 11L10 21l-7.500-5L1 5z" fill="#1e3f6b" stroke="#b8cae0" /><path d="M1.500 5.500L10 9l8.500-3.500M10 9v12" fill="none" stroke="#d9e5f1" strokeWidth="1.800" /><path d="M4 5l6-2.500L16 5l-6 2.500zM4 9l4 2v5l-3-2zM16 9l-4 2v5l3-2z" fill="#0d1d38" /></svg>
      </TaskCell>
      <TaskCell underline active><VmwareIcon bright className="h-[22px] w-[22px]" /></TaskCell>
      <TaskCell underline>
        <svg viewBox="0 0 24 24" className="h-6 w-6"><path d="M0 0h24v24H0z" fill="#1583e0" /><circle cx="12" cy="12" r="10" fill="#fff" /><path d="M3 12l5.500-4v2.700h7V8l5.500 4-5.500 4v-2.700h-7V16z" fill="#1583e0" /></svg>
      </TaskCell>
      <div className="flex-1" />
      <Cell className="w-[37px]"><svg viewBox="0 0 16 16" className="h-4 w-4" fill="none" stroke="#fff" strokeWidth="1.200"><circle cx="10.500" cy="3.500" r="2.800" /><path d="M7.500 10c0-5 6.500-5 7 0" /><circle cx="5" cy="8.500" r="2.600" /><path d="M1 15c0-5 7.500-5 8 0" /></svg></Cell>
      <Cell className="w-[23px]"><svg viewBox="0 0 12 8" className="h-2 w-3"><path d="M.5 7L6 1.500 11.500 7" fill="none" stroke="#fff" strokeWidth="1.200" /></svg></Cell>
      <Cell className="w-[23px]"><svg viewBox="0 0 17 13" className="h-[13px] w-[17px]"><path d="M5.500 3.500h9.500v7H6M15 5.500h1.500v3H15" fill="none" stroke="#fff" /><path d="M7 5h7v4.500H7zM1 3h4v3L4 7.500H2L1 6z" fill="#fff" /><path d="M2 1v2M4 1v2M3 7v3.500h3" stroke="#fff" fill="none" /></svg></Cell>
      <Cell className="w-[25px]"><svg viewBox="0 0 15 12" className="h-3 w-[15px]"><path d="M.5 4h2.500l3.500-3.500v11L3 8H.5zM9 3.500l5 5M14 3.500l-5 5" fill="none" stroke="#fff" /></svg></Cell>
      <Cell className="w-[27px]"><svg viewBox="0 0 17 14" className="h-[14px] w-[17px]"><path d="M6 1.500h10v8H4.500V7M7.500 12.500h6M10.500 9.500v3M.5.500h4v3h-4zM2.500 3.500v5" fill="none" stroke="#fff" /></svg></Cell>
      <Cell className="w-[34px] text-[12px] tracking-[-0.75px]">ESP</Cell>
      <div className="mr-[9px] flex w-[60px] shrink-0 flex-col items-center text-[11.500px] leading-[18px] tracking-[-0.2px] whitespace-nowrap"><span>2:13 p. m.</span><span>11/12/2018</span></div>
      <div className="relative h-10 w-[45px] shrink-0 border-r border-[#555]">
        <svg viewBox="0 0 16 15" className="mt-3 ml-[8px] h-[15px] w-4"><path d="M0 0h16v11H6l-3 3.500V11H0z" fill="#fff" /><path d="M2.500 3h11M2.500 5.500h11M2.500 8h7" stroke="#070b12" strokeWidth="1.200" /></svg>
        <div className="absolute top-[19px] left-[15px] flex h-4 w-4 items-center justify-center rounded-full border border-[#8d8d8d] bg-[#262a30] text-[11px] leading-none">3</div>
      </div>
      <div className="w-1 shrink-0" />
    </div>
  );
}

export default function App() {
  return (
    <div className="flex h-[768px] w-[1366px] flex-col overflow-hidden bg-white font-[Roboto,sans-serif]">
      <VmTitleBar />
      <PlayerToolbar />
      <GnomeTopPanel />
      <FirefoxTitle />
      <TabStrip />
      <NavBar />
      <BookmarksBar />
      <HueHeader />
      <div className="flex h-[442px] shrink-0 overflow-hidden">
        <Sidebar />
        <div className="relative flex w-[1060px] shrink-0 flex-col overflow-hidden bg-white">
          <FilterRow />
          <DataTable />
          <div className="absolute top-[380px] left-[1009px] flex h-[42px] w-[46px] items-center justify-center rounded-[5px] bg-black/50">
            <svg viewBox="0 0 13 9" className="h-[9px] w-[13px]"><path d="M1.500 7.500l5-5 5 5" fill="none" stroke="#fff" strokeWidth="3" /></svg>
          </div>
        </div>
        <ScrollBar />
      </div>
      <GnomeBottomPanel />
      <WindowsTaskbar />
    </div>
  );
}
